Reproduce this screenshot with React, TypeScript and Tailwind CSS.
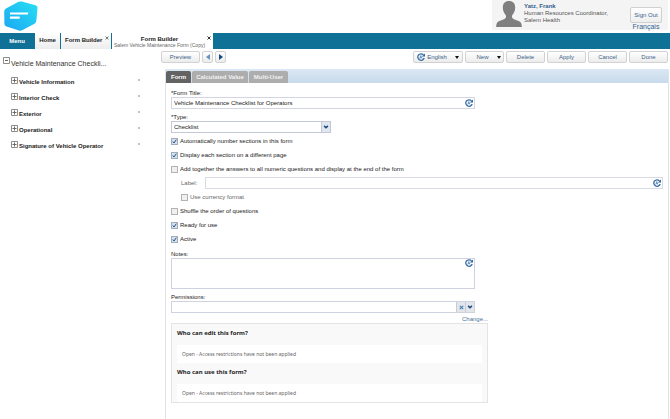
import type { ReactNode } from "react";

const sections = [
  "Vehicle Information",
  "Interior Check",
  "Exterior",
  "Operational",
  "Signature of Vehicle Operator",
];

const actions = ["Delete", "Apply", "Cancel", "Done"];

const permissions = ["Who can edit this form?", "Who can use this form?"];

function Logo() {
  return (
    <svg viewBox="0 0 34 30" className="w-[34px] h-[30px]" aria-hidden="true">
      <defs>
        <linearGradient id="logo" x1="1" y1="0" x2="0" y2="1">
          <stop offset="0" stopColor="#27e0f3" />
          <stop offset="1" stopColor="#1ba6f3" />
        </linearGradient>
      </defs>
      <path
        d="M14.5.8Q16 .1 17.700 .6L31.500 4.200Q33.700 4.900 33.500 7L32.300 20Q32.100 21.800 30.500 22.700L18.500 29.100Q16.800 30 15 29.500L2.500 25.500Q.5 24.800.4 22.800L.2 10.500Q.2 8.500 2 7.500Z"
        fill="url(#logo)"
      />
      <path d="M6 11.400H24.500L23.700 13.500H6ZM6 15.600H15.700V17.800H6Z" fill="#fff" />
    </svg>
  );
}

function Avatar() {
  return (
    <svg viewBox="0 0 26 26" className="w-[26px] h-[26px]" fill="#7f7f7f" aria-hidden="true">
      <path d="M13 0C17 0 19.300 2.600 19.200 6.500C19.200 10 18 12 16.200 14.200C15.600 16 16 17.500 18 18.200L22.500 20C25 21 25.700 22.500 25.900 26H.1C.3 22.500 1 21 3.500 20L8 18.200C10 17.500 10.400 16 9.800 14.200C8 12 6.800 10 6.800 6.500C6.700 2.600 9 0 13 0Z" />
    </svg>
  );
}

function TranslateIcon() {
  return (
    <svg viewBox="0 0 16 16" className="size-2 shrink-0" fill="none" aria-hidden="true">
      <path d="M14.300 10A6.500 6.500 0 1 1 13 3.800" stroke="#3a6ea3" strokeWidth="2.600" />
      <path d="M9.800 7H16V1Z" fill="#2f6299" />
      <path d="M5.500 11L7.700 5L9.900 11M6.200 9.200H9.200" stroke="#4e86b8" strokeWidth="1.600" />
    </svg>
  );
}

function Chevron() {
  return (
    <svg viewBox="0 0 8 8" className="size-1.5" fill="none" stroke="#1d477b" strokeWidth="2" aria-hidden="true">
      <path d="M1.500 2.500L4 5L6.500 2.500" />
    </svg>
  );
}

function CloseIcon() {
  return (
    <svg viewBox="0 0 4 4" className="size-1" stroke="currentColor" aria-hidden="true">
      <path d="M.5.5L3.500 3.500M3.500.5L.5 3.500" />
    </svg>
  );
}

function PlusBox({ minus = false }: { minus?: boolean }) {
  return (
    <svg viewBox="0 0 7 7" className="size-[7px] shrink-0" fill="none" stroke="#6b6b6b" aria-hidden="true">
      <path d="M.5.5H6.500V6.500H.5Z" stroke="#8c8c8c" />
      <path d={minus ? "M2 3.500H5" : "M1.500 3.500H5.500M3.500 1.500V5.500"} />
    </svg>
  );
}

function Button({ children, className = "w-[39px]", label }: { children: ReactNode; className?: string; label?: string }) {
  return (
    <button
      type="button"
      aria-label={label}
      className={`${className} h-3 flex items-center justify-center rounded-[2px] border border-[#d2d2d2] bg-linear-to-b from-white to-[#ececec] text-[#3d6288]`}
    >
      {children}
    </button>
  );
}

function Check({ label, checked = false, muted = false }: { label: string; checked?: boolean; muted?: boolean }) {
  return (
    <label className={`flex items-center gap-[2px] h-[14px] ${muted ? "text-[#666]" : "text-[#222]"}`}>
      <span className="grid size-[7px]">
        <input
          type="checkbox"
          defaultChecked={checked}
          className="peer appearance-none col-start-1 row-start-1 size-[7px] border border-[#b3b3b3] bg-[#f0f0f0] checked:bg-[#d5e0ec] checked:border-[#9eacbc]"
        />
        <svg viewBox="0 0 7 7" className="invisible peer-checked:visible pointer-events-none col-start-1 row-start-1 size-[7px]" fill="none" stroke="#25508a" aria-hidden="true">
          <path d="M1.800 3.500L3 5L5.300 1.700" />
        </svg>
      </span>
      {label}
    </label>
  );
}

function Header() {
  return (
    <header className="flex justify-between h-[33px]">
      <div className="pl-1 pt-px">
        <Logo />
      </div>
      <div className="flex w-44 h-[30px] mr-[2px] pl-1 pr-[6px] bg-[#f4f4f4]">
        <div className="pt-px">
          <Avatar />
        </div>
        <div className="flex-1 pl-[2px] pt-[3px] leading-[7px] text-[#555] whitespace-nowrap">
          <p className="font-bold text-[#355f8d]">Yatz, Frank</p>
          <p>Human Resources Coordinator,</p>
          <p>Salem Health</p>
        </div>
        <div className="flex flex-col items-center pt-[7px] text-[#355f8d]">
          <button type="button" className="w-8 h-4 shrink-0 rounded-[2px] border border-[#d0d0d0] bg-linear-to-b from-white to-[#eee]">
            Sign Out
          </button>
          <a href="#fr" className="text-[7px] leading-[8px]">Français</a>
        </div>
      </div>
    </header>
  );
}

function NavTabs() {
  return (
    <nav className="flex h-4 gap-px bg-[#0f7196] text-center text-[#222]">
      <button type="button" className="w-[34px] font-bold text-white">Menu</button>
      <a href="#home" className="w-[25px] bg-linear-to-b from-white to-[#ededed] font-bold leading-[14px]">Home</a>
      <div className="flex justify-between w-[50px] pl-1 pr-[2px] bg-linear-to-b from-white to-[#ededed]">
        <a href="#builder" className="font-bold leading-[14px]">Form Builder</a>
        <button type="button" aria-label="Close tab" className="self-start pt-[3px] text-[#777]">
          <CloseIcon />
        </button>
      </div>
      <div className="flex justify-end w-[101px] pr-[2px] bg-white">
        <a href="#form" className="flex-1 pt-[3px] whitespace-nowrap">
          <span className="block font-bold leading-[7px]">Form Builder</span>
          <span className="block text-[5px] leading-[5px] text-[#666]">Salem Vehicle Maintenance Form (Copy)</span>
        </a>
        <button type="button" aria-label="Close tab" className="self-start pt-[3px] text-[#333]">
          <CloseIcon />
        </button>
      </div>
    </nav>
  );
}

function Sidebar() {
  return (
    <aside className="w-[161px] shrink-0 pl-[3px] pt-2">
      <div className="flex items-start gap-px h-[15px] text-[7px] text-[#333]">
        <PlusBox minus />
        <span className="pt-[3px]">Vehicle Maintenance Checkli...</span>
      </div>
      <ul className="pl-2 pr-[21px]">
        {sections.map((name) => (
          <li key={name} className="flex items-center gap-px h-4 font-bold text-[#222]">
            <PlusBox />
            <span className="flex-1 pt-[3px]">{name}</span>
            <span className="size-[2px] bg-[#c4c4c4]" />
          </li>
        ))}
      </ul>
    </aside>
  );
}

function Toolbar() {
  return (
    <div className="flex items-center justify-between h-[14px] pr-[2px]">
      <div className="flex gap-[2px]">
        <Button>Preview</Button>
        <Button className="w-[11px]" label="Previous">
          <svg viewBox="0 0 4 6" className="w-1 h-1.5" fill="#6c93ba"><path d="M4 0V6L0 3Z" /></svg>
        </Button>
        <Button className="w-[11px]" label="Next">
          <svg viewBox="0 0 4 6" className="w-1 h-1.5" fill="#164a83"><path d="M0 0V6L4 3Z" /></svg>
        </Button>
      </div>
      <div className="flex gap-[2px]">
        <Button className="w-[50px] gap-[2px]">
          <TranslateIcon />
          English
          <svg viewBox="0 0 4 3" className="w-1 h-[3px] ml-1.5" fill="#111"><path d="M0 0H4L2 3Z" /></svg>
        </Button>
        <Button className="w-[39px] pl-2">
          New
          <svg viewBox="0 0 4 3" className="w-1 h-[3px] ml-2" fill="#111"><path d="M0 0H4L2 3Z" /></svg>
        </Button>
        {actions.map((name) => (
          <Button key={name}>{name}</Button>
        ))}
      </div>
    </div>
  );
}

function PanelTabs() {
  return (
    <div className="flex items-end gap-px h-[14px] bg-linear-to-b from-[#dbe7f4] to-[#c8daeb] font-bold text-white" role="tablist">
      <button type="button" role="tab" aria-selected="true" className="w-[25px] h-3 rounded-t-[2px] bg-[#636363]">Form</button>
      <button type="button" role="tab" aria-selected="false" className="w-14 h-3 rounded-t-[2px] bg-[#adadad] text-[#f1f1f1]">Calculated Value</button>
      <button type="button" role="tab" aria-selected="false" className="w-[39px] h-3 rounded-t-[2px] bg-[#adadad] text-[#f1f1f1]">Multi-User</button>
    </div>
  );
}

function FormPanel() {
  return (
    <form className="px-[5px] pt-[5px] leading-[8px] text-[#222]">
      <div className="w-[304px]">
        <label htmlFor="title" className="block h-[9px] pt-px">*Form Title:</label>
        <div className="flex items-center h-3 border border-[#d3d6e2] pr-px">
          <input id="title" defaultValue="Vehicle Maintenance Checklist for Operators" className="flex-1 px-[2px] outline-none" />
          <TranslateIcon />
        </div>
        <label htmlFor="type" className="block h-3 pt-1">*Type:</label>
        <div className="grid w-40 h-3 border border-[#c3c8d8]">
          <select id="type" className="appearance-none col-start-1 row-start-1 px-[2px] outline-none">
            <option>Checklist</option>
          </select>
          <span className="pointer-events-none col-start-1 row-start-1 justify-self-end flex items-center justify-center w-[9px] border-l border-[#c3c8d8] bg-[#e0e6ef]">
            <Chevron />
          </span>
        </div>
      </div>

      <div className="py-px">
        <Check label="Automatically number sections in this form" checked />
        <Check label="Display each section on a different page" checked />
        <Check label="Add together the answers to all numeric questions and display at the end of the form" />
        <div className="pl-2.5">
          <div className="flex items-center h-[14px] text-[#666]">
            <label htmlFor="label" className="w-6">Label:</label>
            <div className="flex flex-1 items-center h-3 border border-[#d8dbe5] pr-px">
              <input id="label" className="flex-1 px-[2px] outline-none" />
              <TranslateIcon />
            </div>
          </div>
          <Check label="Use currency format" muted />
        </div>
        <Check label="Shuffle the order of questions" />
        <Check label="Ready for use" checked />
        <Check label="Active" checked />
      </div>

      <div className="w-[304px]">
        <label htmlFor="notes" className="block h-[11px] pt-[3px]">Notes:</label>
        <div className="flex items-start h-[31px] border border-[#cfd2df] pr-px">
          <textarea id="notes" className="flex-1 h-full px-[2px] resize-none outline-none" />
          <TranslateIcon />
        </div>
        <label htmlFor="permissions" className="block h-3 pt-1">Permissions:</label>
        <div className="flex h-3 border border-[#cfd2df]">
          <input id="permissions" className="flex-1 px-[2px] outline-none" />
          <button type="button" aria-label="Clear" className="flex items-center justify-center w-[9px] border-l border-[#c9cdd6] bg-[#e2e6eb]">
            <svg viewBox="0 0 6 6" className="size-[5px]" stroke="#4d85b3" strokeWidth="1.500"><path d="M1 1L5 5M5 1L1 5" /></svg>
          </button>
          <button type="button" aria-label="Open list" className="flex items-center justify-center w-[9px] border-l border-[#c9cdd6] bg-[#e2e6eb]">
            <Chevron />
          </button>
        </div>
      </div>

      <div className="w-[317px]">
        <div className="h-2.5 pt-[2px] text-right">
          <a href="#change" className="text-[#4b729c]">Change...</a>
        </div>
        <div className="border border-[#e4e4e4] bg-[#f9f9f9] px-[5px] font-['Noto_Sans',sans-serif]">
          {permissions.map((title) => (
            <section key={title} className="pt-[5px]">
              <h2 className="h-4 font-bold leading-[8px]">{title}</h2>
              <p className="h-[18px] px-[5px] bg-white text-[5px] leading-[18px] text-[#666]">
                Open - Access restrictions have not been applied
              </p>
            </section>
          ))}
        </div>
      </div>
    </form>
  );
}

export default function App() {
  return (
    <div className="flex flex-col min-h-screen bg-white font-['Liberation_Sans',Arial,sans-serif] text-[6px] leading-[8px]">
      <Header />
      <NavTabs />
      <div className="flex flex-1">
        <Sidebar />
        <main className="flex flex-col flex-1 pt-px">
          <Toolbar />
          <div className="flex-1 mt-[5px] ml-1 mr-px border-x border-[#e0e3e8]">
            <PanelTabs />
            <FormPanel />
          </div>
        </main>
      </div>
    </div>
  );
}
